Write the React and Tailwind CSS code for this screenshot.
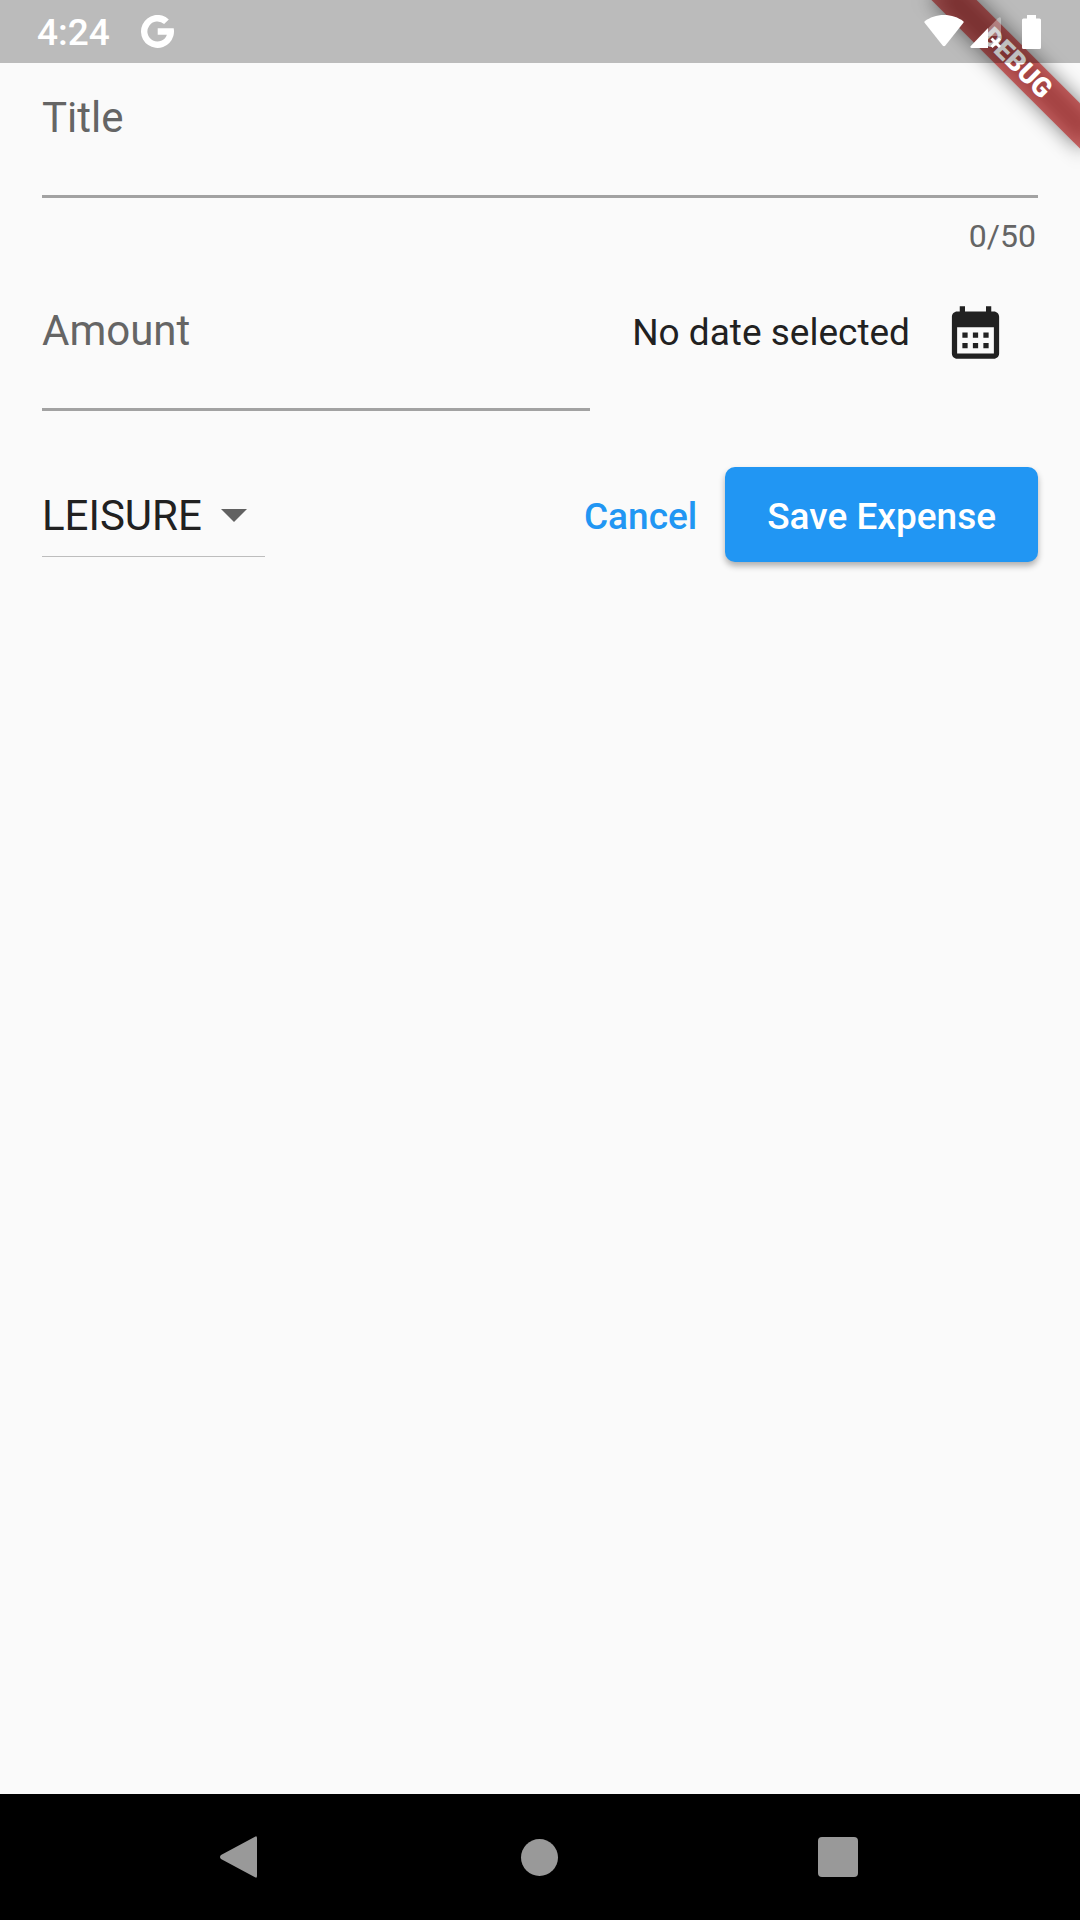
import { useState } from "react";

function GoogleIcon() {
  return (
    <svg className="size-[33px]" viewBox="0 0 33 33" fill="currentColor" aria-hidden="true">
      <path d="M27.8 4.4 23.1 9.1A10 10 0 1 0 25.9 19.7H16.7V13.3H32.7A16.5 16.5 0 1 1 27.8 4.4Z" />
    </svg>
  );
}

function WifiIcon() {
  return (
    <svg className="h-[34px] w-10" viewBox="0 0 40 34" fill="currentColor" aria-hidden="true">
      <path d="M20 0C12.5 0 5.800 2.400.700 6.200Q0 6.900.600 7.800L18.600 30.500Q20 31.800 21.400 30.500L39.400 7.800Q40 6.900 39.300 6.200C34.200 2.400 27.500 0 20 0Z" />
    </svg>
  );
}

function SignalIcon() {
  return (
    <svg className="h-[34px] w-8" viewBox="0 0 32 34" fill="currentColor" aria-hidden="true">
      <path d="M18 13.500 28 3.200Q31 0.800 31 4V21H18Z" opacity="0.35" />
      <path d="M18 13V33H1.500Q-.500 32.500.800 31Z" />
      <path d="M21.500 23.500 30 32M30 23.500 21.500 32" stroke="currentColor" strokeWidth="3" />
    </svg>
  );
}

function BatteryIcon() {
  return (
    <svg className="h-[34px] w-[19px]" viewBox="0 0 19 34" fill="currentColor" aria-hidden="true">
      <path d="M5 0H14V3.500H17.500Q19 3.500 19 5V32.500Q19 34 17.500 34H1.500Q0 34 0 32.500V5Q0 3.500 1.500 3.500H5Z" />
    </svg>
  );
}

function CalendarIcon() {
  return (
    <svg className="size-[63px]" viewBox="0 0 24 24" fill="currentColor" aria-hidden="true">
      <path d="M19 4h-1V2h-2v2H8V2H6v2H5c-1.110 0-1.990.900-1.990 2L3 20c0 1.100.890 2 2 2h14c1.100 0 2-.900 2-2V6c0-1.100-.900-2-2-2zm0 16H5V10h14v10z" />
      <path d="M7 12h2v2H7zM11 12h2v2h-2zM15 12h2v2h-2zM7 16h2v2H7zM11 16h2v2h-2zM15 16h2v2h-2z" />
    </svg>
  );
}

function StatusBar() {
  return (
    <header className="relative z-10 flex h-[63px] items-center justify-between bg-black/25 pl-[37px] pr-[39px] text-white">
      <div className="flex items-center gap-[31px]">
        <time className="pt-0.5 text-[37px] leading-[63px] font-medium">4:24</time>
        <GoogleIcon />
      </div>
      <div className="flex items-center">
        <WifiIcon />
        <span className="ml-[6px] mr-5">
          <SignalIcon />
        </span>
        <BatteryIcon />
      </div>
    </header>
  );
}

function DebugBanner() {
  return (
    <div className="pointer-events-none absolute top-0 right-0 size-[220px] overflow-hidden">
      <div className="absolute top-[47px] left-[52px] h-8 w-[210px] rotate-45">
        <div className="absolute inset-0 bg-black/50 blur-[10px]" />
        <div className="relative bg-[#b71c1c]/63 text-center text-[27px] leading-8 font-black text-white">
          DEBUG
        </div>
      </div>
    </div>
  );
}

function TextField({ id, label, ...props }) {
  return (
    <div className="border-b-[3px] border-[#a2a2a2]">
      <label htmlFor={id} className="block text-[42px] leading-[52px] text-[#656565]">
        {label}
      </label>
      <input
        id={id}
        className="block h-[51px] w-full bg-transparent text-[42px] text-[#212121] outline-none"
        {...props}
      />
    </div>
  );
}

function ExpenseForm() {
  const [title, setTitle] = useState("");
  return (
    <form className="flex-1 px-[42px] pt-[29px]" onSubmit={(e) => e.preventDefault()}>
      <TextField
        id="title"
        label="Title"
        maxLength={50}
        value={title}
        onChange={(e) => setTitle(e.target.value)}
      />
      <p className="pt-5 pr-0.5 text-right text-[32px] leading-9 text-[#656565]">{title.length}/50</p>

      <div className="mt-[51px] flex items-start gap-[42px]">
        <div className="flex-1">
          <TextField id="amount" label="Amount" inputMode="decimal" />
        </div>
        <div className="-mt-9 flex items-center text-[#212121]">
          <span className="pt-0.5 text-[37px]">No date selected</span>
          <button
            type="button"
            aria-label="Select date"
            className="ml-0.5 flex size-[126px] items-center justify-center"
          >
            <CalendarIcon />
          </button>
        </div>
      </div>

      <div className="mt-[56px] flex items-center justify-between">
        <div className="relative w-[223px] border-b border-[#bdbdbd]">
          <select
            aria-label="Category"
            defaultValue="LEISURE"
            className="block h-[84px] w-full appearance-none bg-transparent pt-0.5 text-[42px] text-[#212121] outline-none"
          >
            <option>FOOD</option>
            <option>TRAVEL</option>
            <option>LEISURE</option>
            <option>WORK</option>
          </select>
          <svg
            className="pointer-events-none absolute top-[37px] right-[18px] h-[13px] w-[26px]"
            viewBox="0 0 26 13"
            fill="#616161"
            aria-hidden="true"
          >
            <path d="M0 0H26L13 13Z" />
          </svg>
        </div>
        <div className="flex items-center gap-2">
          <button type="button" className="h-[95px] px-5 pt-1 text-[37px] font-medium text-[#2196f3]">
            Cancel
          </button>
          <button
            type="submit"
            className="h-[95px] rounded-[10px] bg-[#2196f3] px-[42px] pt-1 text-[37px] font-medium text-white shadow-[0_4px_6px_rgba(0,0,0,0.3)]"
          >
            Save Expense
          </button>
        </div>
      </div>
    </form>
  );
}

function NavBar() {
  const button = "flex h-[126px] w-[120px] items-center justify-center";
  return (
    <nav className="flex justify-center gap-[179px] bg-black pr-0.5 text-[#999999]">
      <button type="button" aria-label="Back" className={button}>
        <svg className="size-[42px]" viewBox="0 0 42 42" fill="currentColor" aria-hidden="true">
          <path d="M36 .700Q38 -.500 38 2V40Q38 42.500 36 41.300L2 23Q0 21 2 19Z" />
        </svg>
      </button>
      <button type="button" aria-label="Home" className={button}>
        <span className="size-[37px] rounded-full bg-current" />
      </button>
      <button type="button" aria-label="Recent apps" className={button}>
        <span className="size-10 rounded-[4px] bg-current" />
      </button>
    </nav>
  );
}

export default function App() {
  return (
    <div className="relative flex min-h-screen flex-col bg-[#fafafa] font-['Roboto',sans-serif]">
      <StatusBar />
      <DebugBanner />
      <ExpenseForm />
      <NavBar />
    </div>
  );
}
